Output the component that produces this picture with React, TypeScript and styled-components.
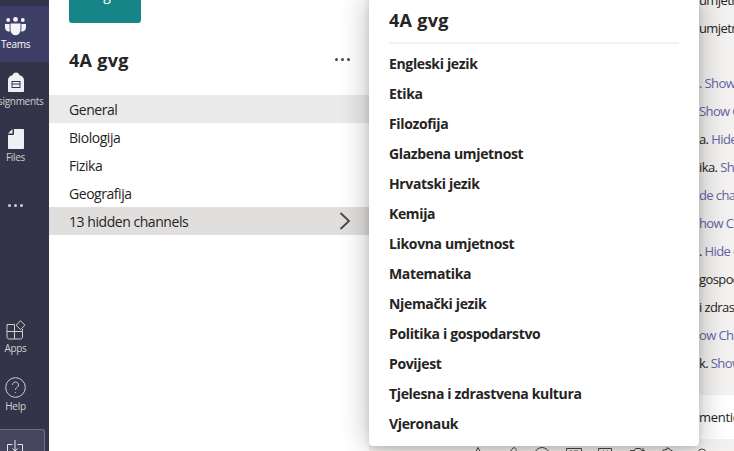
import styled, { createGlobalStyle } from "styled-components";

const GlobalStyle = createGlobalStyle`
  html, body {
    margin: 0;
    height: 100%;
    overflow: hidden;
    background: #f3f2f1;
    font-family: "Open Sans", "Liberation Sans", sans-serif;
    color: #252423;
  }
`;

const Page = styled.div`
  position: relative;
  display: flex;
  width: 734px;
  height: 451px;
  overflow: hidden;
`;

const Rail = styled.nav`
  width: 49px;
  flex-shrink: 0;
  display: flex;
  flex-direction: column;
  background: #33344a;
  overflow: hidden;
`;

const RailItem = styled.div<{ $active?: boolean; $height?: number }>`
  width: 49px;
  height: ${(p) => p.$height ?? 56}px;
  flex-shrink: 0;
  box-sizing: border-box;
  padding-right: 18px;
  display: flex;
  flex-direction: column;
  align-items: center;
  justify-content: center;
  gap: 2px;
  background: ${(p) => (p.$active ? "#3e3f66" : "transparent")};
  color: ${(p) => (p.$active ? "#ffffff" : "#d2d0ce")};
`;

const RailLabel = styled.span`
  font-size: 10px;
  line-height: 13px;
  white-space: nowrap;
  letter-spacing: -0.3px;
`;

const RailTop = styled.div`
  flex: 0 0 6px;
`;

const RailSpacer = styled.div`
  flex: 1;
`;

const DownloadTile = styled.div`
  width: 45px;
  height: 22px;
  margin-top: 6px;
  flex-shrink: 0;
  box-sizing: border-box;
  border: 1px solid #6e6f84;
  border-bottom: 0;
  border-left: 0;
  border-radius: 0 3px 0 0;
  background: #45465e;
  display: flex;
  justify-content: center;
  padding-top: 10px;
  padding-right: 15px;
`;

const ChannelPane = styled.aside`
  width: 320px;
  flex-shrink: 0;
  display: flex;
  flex-direction: column;
  background: #ffffff;
`;

const TeamTile = styled.div`
  width: 72px;
  height: 23px;
  margin-left: 20px;
  border-radius: 0 0 3px 3px;
  background: #158588;
  overflow: hidden;
  display: flex;
  justify-content: center;
  align-items: flex-start;
`;

const TileLetter = styled.span`
  color: #ffffff;
  font-size: 14px;
  line-height: 14px;
  margin-top: -12px;
  margin-left: 4px;
`;

const TeamHeader = styled.div`
  height: 72px;
  display: flex;
  align-items: center;
  justify-content: space-between;
  padding: 0 19px 0 20px;
`;

const TeamName = styled.h1`
  margin: 2px 0 0;
  font-size: 18px;
  font-weight: 700;
  letter-spacing: 0.3px;
`;

const Dots = styled.span`
  display: flex;
  gap: 3px;
`;

const Dot = styled.i<{ $color: string }>`
  width: 3px;
  height: 3px;
  border-radius: 50%;
  background: ${(p) => p.$color};
`;

const ChannelRow = styled.div<{ $tone?: "selected" | "hidden" }>`
  height: 28px;
  display: flex;
  align-items: center;
  justify-content: space-between;
  padding: 0 18px 0 20px;
  font-size: 14px;
  letter-spacing: -0.45px;
  background: ${(p) =>
    p.$tone === "selected" ? "#ebeaea" : p.$tone === "hidden" ? "#e1dfdd" : "transparent"};
`;

const Main = styled.main`
  flex: 1;
  display: flex;
  flex-direction: column;
  margin-top: -14px;
  min-width: 0;
  overflow: hidden;
  background: #f3f2f1;
  font-size: 13px;
`;

const FeedGroup = styled.div`
  & + & {
    margin-top: 27px;
  }
`;

const FeedRow = styled.div`
  height: 28px;
  line-height: 28px;
  padding-left: 330px;
  white-space: nowrap;
  letter-spacing: -0.6px;
`;

const FeedLink = styled.span`
  color: #6264a7;
`;

const Composer = styled.div`
  margin-top: 18px;
  height: 44px;
  background: #ffffff;
  padding-left: 330px;
  line-height: 44px;
  white-space: nowrap;
  letter-spacing: -0.3px;
`;

const FeedDivider = styled.div`
  height: 1px;
  background: #e6e4e3;
`;

const Toolbar = styled.div`
  margin-top: 8px;
  display: flex;
  padding-left: 101px;
  gap: 16px;
  color: #484644;
`;

const Popover = styled.section`
  position: absolute;
  left: 369px;
  top: -4px;
  width: 330px;
  height: 450px;
  box-sizing: border-box;
  padding: 4px 20px 0;
  background: #ffffff;
  border-radius: 4px;
  box-shadow: 0 0 30px rgba(0, 0, 0, 0.28), 0 2px 6px rgba(0, 0, 0, 0.12);
`;

const PopoverTitle = styled.h2`
  margin: 0;
  height: 40px;
  padding-bottom: 2px;
  display: flex;
  align-items: center;
  font-size: 18px;
  font-weight: 700;
  border-bottom: 2px solid #f3f2f1;
  letter-spacing: 0.3px;
`;

const HiddenList = styled.ul`
  list-style: none;
  margin: 5px 0 0;
  padding: 0;
`;

const HiddenItem = styled.li`
  height: 30px;
  line-height: 30px;
  font-size: 14px;
  font-weight: 700;
  letter-spacing: -0.35px;
`;

const hiddenChannels = [
  "Engleski jezik",
  "Etika",
  "Filozofija",
  "Glazbena umjetnost",
  "Hrvatski jezik",
  "Kemija",
  "Likovna umjetnost",
  "Matematika",
  "Njemački jezik",
  "Politika i gospodarstvo",
  "Povijest",
  "Tjelesna i zdrastvena kultura",
  "Vjeronauk",
];

const TeamsIcon = () => (
  <svg width="21" height="19" viewBox="0 0 21 19" fill="#f4f4f8">
    <circle cx="3.2" cy="3" r="1.9" />
    <circle cx="10.5" cy="2.4" r="2.4" />
    <circle cx="17.8" cy="3" r="1.9" />
    <path d="M0 7h4.6v5.2c0 .9.2 1.7.5 2.3C2.200 15 0 13 0 10.500z" />
    <path d="M21 7h-4.600v5.200c0 .9-.2 1.700-.5 2.300 2.900.5 5.100-1.500 5.100-4z" />
    <path d="M5.500 6.600h10v6.200a5 5.500 0 0 1-10 0z" />
  </svg>
);

const BagIcon = () => (
  <svg width="16" height="21" viewBox="0 0 16 21">
    <path
      d="M1 20c-.6 0-1-.4-1-1V8c0-2.500 1.800-4.300 4.500-4.800C5 1.500 6.300.5 8 .5s3 1 3.500 2.700C14.200 3.700 16 5.500 16 8v11c0 .6-.4 1-1 1z"
      fill="#f0eff3"
    />
    <rect x="4" y="9.500" width="8" height="6" fill="none" stroke="#33344a" strokeWidth="1" />
    <path d="M4 12h8" stroke="#33344a" strokeWidth="1" />
  </svg>
);

const FileIcon = () => (
  <svg width="16" height="20" viewBox="0 0 16 20">
    <path d="M6 0h9c.6 0 1 .4 1 1v18c0 .6-.4 1-1 1H1c-.6 0-1-.4-1-1V6h5c.6 0 1-.4 1-1z" fill="#f0eff3" />
    <path d="M4.500 0v4.500H0z" fill="#f0eff3" />
  </svg>
);

const AppsIcon = () => (
  <svg width="20" height="20" viewBox="0 0 20 20" fill="none" stroke="#d2d0ce" strokeWidth="1">
    <path d="M1 4.500h7.500v14.500H3c-1.100 0-2-.9-2-2z" />
    <path d="M1 11.500h15.500V17c0 1.100-.9 2-2 2H8.500v-7.500" />
    <path d="M16.500 11.500V9" />
    <path d="M14.500 .8l4.400 4.400-4.400 4.400-4.400-4.400z" />
  </svg>
);

const HelpIcon = () => (
  <svg width="21" height="21" viewBox="0 0 21 21" fill="none" stroke="#d2d0ce" strokeWidth="1">
    <circle cx="10.500" cy="10.500" r="9.800" />
    <path d="M7.500 8c0-1.700 1.300-3 3-3s3 1.300 3 2.900c0 2.400-3 2.500-3 5" />
    <circle cx="10.500" cy="15.500" r=".6" fill="#d2d0ce" stroke="none" />
  </svg>
);

const DownloadIcon = () => (
  <svg width="16" height="13" viewBox="0 0 16 13" fill="none" stroke="#e6e6ea" strokeWidth="1">
    <path d="M5.500 4.500H.5V13M10.500 4.500h5V13" />
    <path d="M8 0v11M5.500 8.500 8 11l2.500-2.500" />
  </svg>
);

const Chevron = () => (
  <svg width="12" height="18" viewBox="0 0 12 18" fill="none" stroke="#484644" strokeWidth="1.800">
    <path d="M1.500 1 10 9l-8.500 8" />
  </svg>
);

const ToolIcon = ({ d }: { d: string }) => (
  <svg width="16" height="16" viewBox="0 0 16 16" fill="none" stroke="currentColor" strokeWidth="1">
    <path d={d} />
  </svg>
);

const toolIcons = [
  "M1 14 8 .5 15 14",
  "M1 14 11 1c2-1 4 1 3 3L5 14",
  "M.5 8a7.500 7.500 0 0 1 15 0v8H.5z",
  "M.5 16V1.500h15V16M4 4h2M8 4h4",
  "M.5 16V1.500h13V16M5 4h1M9 4h1",
  "M.5 16V3.500h4l1-2h5l1 2h3V16M13 1v3",
  "M1 16V3l4-.5V.5l9 6",
  "M4 16V6a4 4 0 0 1 8 0v10",
];

export default function App() {
  return (
    <Page>
      <GlobalStyle />
      <Rail>
        <RailTop />
        <RailItem $active>
          <TeamsIcon />
          <RailLabel>Teams</RailLabel>
        </RailItem>
        <RailItem>
          <BagIcon />
          <RailLabel>Assignments</RailLabel>
        </RailItem>
        <RailItem>
          <FileIcon />
          <RailLabel>Files</RailLabel>
        </RailItem>
        <RailItem $height={62}>
          <Dots>
            <Dot $color="#d2d0ce" />
            <Dot $color="#d2d0ce" />
            <Dot $color="#d2d0ce" />
          </Dots>
        </RailItem>
        <RailSpacer />
        <RailItem $height={57}>
          <AppsIcon />
          <RailLabel>Apps</RailLabel>
        </RailItem>
        <RailItem $height={57}>
          <HelpIcon />
          <RailLabel>Help</RailLabel>
        </RailItem>
        <DownloadTile>
          <DownloadIcon />
        </DownloadTile>
      </Rail>

      <ChannelPane>
        <TeamTile>
          <TileLetter>g</TileLetter>
        </TeamTile>
        <TeamHeader>
          <TeamName>4A gvg</TeamName>
          <Dots>
            <Dot $color="#484644" />
            <Dot $color="#484644" />
            <Dot $color="#484644" />
          </Dots>
        </TeamHeader>
        <ChannelRow $tone="selected">General</ChannelRow>
        <ChannelRow>Biologija</ChannelRow>
        <ChannelRow>Fizika</ChannelRow>
        <ChannelRow>Geografija</ChannelRow>
        <ChannelRow $tone="hidden">
          13 hidden channels
          <Chevron />
        </ChannelRow>
      </ChannelPane>

      <Main>
        <FeedGroup>
          <FeedRow>umjetnost</FeedRow>
          <FeedRow>umjetnost</FeedRow>
        </FeedGroup>
        <FeedGroup>
          <FeedRow><FeedLink>. Show Channel</FeedLink></FeedRow>
          <FeedRow><FeedLink>Show Channel</FeedLink></FeedRow>
          <FeedRow>a. <FeedLink>Hide channel</FeedLink></FeedRow>
          <FeedRow>ika. <FeedLink>Show Channel</FeedLink></FeedRow>
          <FeedRow><FeedLink>de channel</FeedLink></FeedRow>
          <FeedRow><FeedLink>how Channel</FeedLink></FeedRow>
          <FeedRow>. <FeedLink>Hide channel</FeedLink></FeedRow>
          <FeedRow>gospodarstvo</FeedRow>
          <FeedRow>i zdrastvena</FeedRow>
          <FeedRow><FeedLink>ow Channel</FeedLink></FeedRow>
          <FeedRow>k. <FeedLink>Show Channel</FeedLink></FeedRow>
        </FeedGroup>
        <FeedDivider />
        <Composer>mention</Composer>
        <Toolbar>
          {toolIcons.map((d) => (
            <ToolIcon key={d} d={d} />
          ))}
        </Toolbar>
      </Main>

      <Popover>
        <PopoverTitle>4A gvg</PopoverTitle>
        <HiddenList>
          {hiddenChannels.map((name) => (
            <HiddenItem key={name}>{name}</HiddenItem>
          ))}
        </HiddenList>
      </Popover>
    </Page>
  );
}
